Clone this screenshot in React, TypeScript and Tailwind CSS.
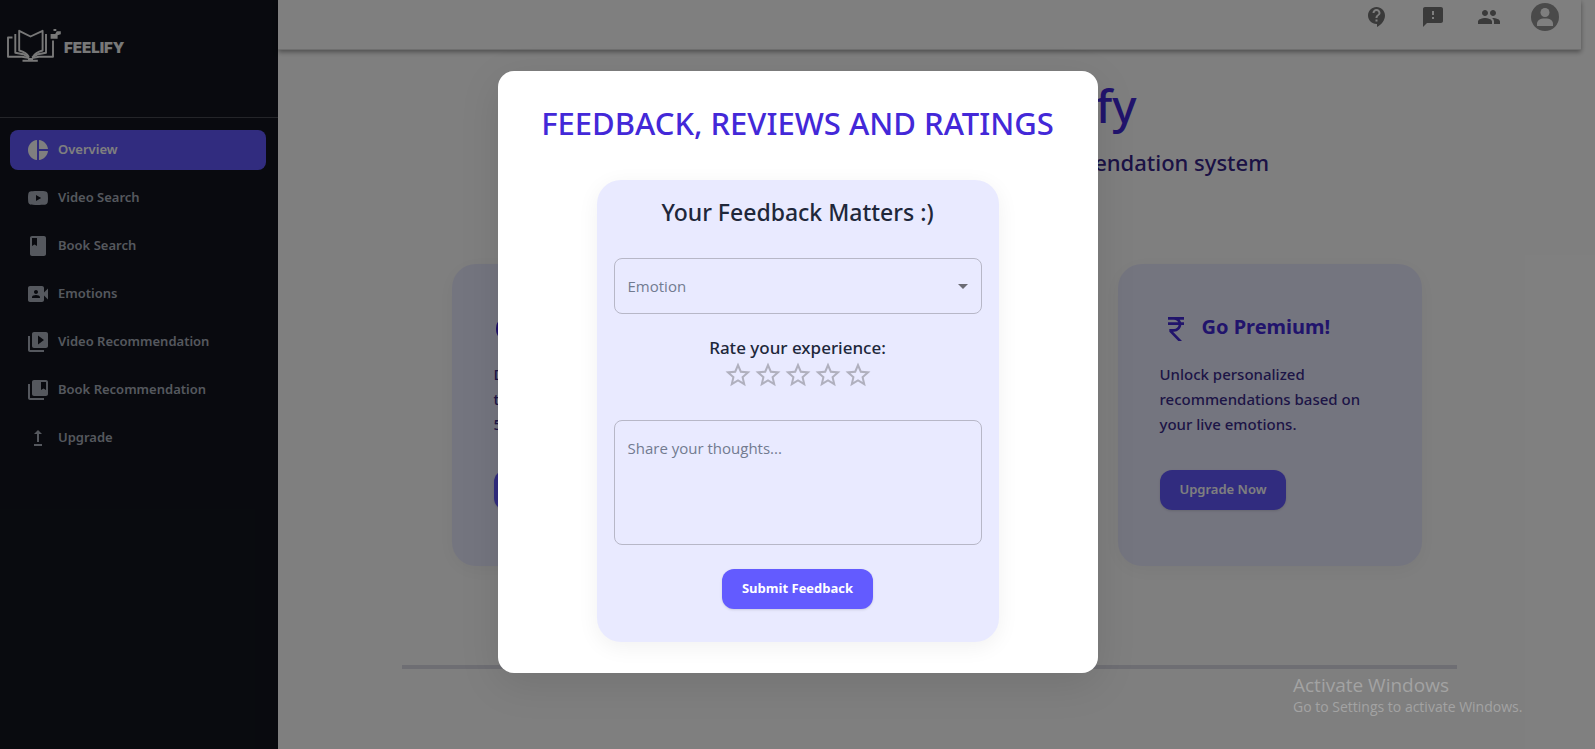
import React from 'react';
import {
  MdPieChart, MdClass, MdVideoCameraFront, MdVideoLibrary, MdCollectionsBookmark, MdUpgrade,
  MdContactSupport, MdFeedback, MdGroup, MdCurrencyRupee, MdStarBorder, MdArrowDropDown,
} from 'react-icons/md';

type IconProps = { className?: string };

function YouTubeIcon({ className }: IconProps) {
  return (
    <svg viewBox="0 0 24 24" fill="currentColor" className={className} aria-hidden="true">
      <path d="M10 15l5.19-3L10 9v6m11.56-7.83c.13.47.22 1.1.28 1.9.07.8.1 1.49.1 2.09L22 12c0 2.19-.16 3.8-.44 4.83-.25.9-.83 1.48-1.73 1.73-.47.13-1.33.22-2.65.28-1.3.07-2.49.1-3.59.1L12 19c-4.19 0-6.8-.16-7.83-.44-.9-.25-1.48-.83-1.73-1.73-.13-.47-.22-1.1-.28-1.9-.07-.8-.1-1.49-.1-2.09L2 12c0-2.19.16-3.8.44-4.83.25-.9.83-1.48 1.73-1.73.47-.13 1.33-.22 2.65-.28 1.3-.07 2.49-.1 3.59-.1L12 5c4.19 0 6.8.16 7.83.44.9.25 1.48.83 1.73 1.73z" />
    </svg>
  );
}

function BookLogo() {
  return (
    <svg viewBox="0 0 54 34" className="h-[34px] w-[54px]" fill="none" stroke="#f0f0f0" strokeWidth="1.9" strokeLinejoin="round" aria-hidden="true">
      <path d="M5.500 9.500H1v19.300h14l7 1.200" />
      <path d="M46 12.500v16.300H32l-7 1.200" />
      <path d="M8.300 6v18.800l8 1.400 6 3.200" />
      <path d="M39 6v18.800l-8 1.400-6 3.200" />
      <path d="M21.500 28.500c-1.500-3-4-4.500-9.300-6V2.800L23.500 8.500 35.600 2.800v19.700c-5.300 1.500-7.800 3-9.300 6" />
      <path d="M15.500 32.800h15.300M21 31h5" />
      <path d="M43.600 6h4.600l1.600-2.700h4V6.300l-3.200 1v3.500h-7zM46.500 1h2.800v2h-2.800z" fill="#f0f0f0" stroke="none" />
    </svg>
  );
}

const navItems = [
  { label: 'Overview', Icon: MdPieChart, active: true },
  { label: 'Video Search', Icon: YouTubeIcon },
  { label: 'Book Search', Icon: MdClass },
  { label: 'Emotions', Icon: MdVideoCameraFront },
  { label: 'Video Recommendation', Icon: MdVideoLibrary },
  { label: 'Book Recommendation', Icon: MdCollectionsBookmark },
  { label: 'Upgrade', Icon: MdUpgrade },
];

function Sidebar() {
  return (
    <aside className="flex w-[278px] shrink-0 flex-col bg-[#12151e]">
      <a href="#home" className="flex h-[117px] items-start gap-[3px] pt-7 pl-[7px]" aria-label="Feelify">
        <BookLogo />
        <span className="pt-2 font-['Inter',sans-serif] text-[15px] leading-6 font-black text-[#f0f0f0]">FEELIFY</span>
      </a>
      <nav className="flex flex-col gap-2 border-t border-[#484a52] py-3 pr-3 pl-[10px] font-['Noto_Sans','Open_Sans',sans-serif]">
        {navItems.map(({ label, Icon, active }) => (
          <a
            key={label}
            href="#nav"
            className={`flex h-10 items-center gap-2 rounded-lg px-4 text-[13px] font-semibold ${
              active ? 'bg-[#6359ff] text-white' : 'text-[#aab0bc]'
            }`}
          >
            <Icon className="size-6" />
            {label}
          </a>
        ))}
      </nav>
    </aside>
  );
}

function TopBar() {
  return (
    <header className="mr-3.5 flex h-[50px] shrink-0 items-start justify-end gap-7 border-b border-[#dedede] pr-[22px] text-[#747474] shadow-[0_2px_5px_rgba(0,0,0,0.4)]">
      <button aria-label="Help" className="flex h-[34px] w-7 items-center justify-center"><MdContactSupport className="size-6" /></button>
      <button aria-label="Feedback" className="flex h-[34px] w-7 items-center justify-center"><MdFeedback className="size-6" /></button>
      <button aria-label="Community" className="flex h-[34px] w-7 items-center justify-center"><MdGroup className="size-6" /></button>
      <button aria-label="Account" className="flex h-[34px] w-7 items-center justify-center">
        <svg viewBox="0 0 28 28" className="size-7" aria-hidden="true">
          <circle cx="14" cy="14" r="14" fill="#949494" />
          <circle cx="14" cy="9.500" r="4.500" fill="#fff" />
          <path d="M6 23v-2c0-3.500 2.500-5.500 8-5.500s8 2 8 5.500v2z" fill="#fff" />
        </svg>
      </button>
    </header>
  );
}

type FeatureProps = { icon: React.ReactNode; title: string; text: string; action: string };

function FeatureCard({ icon, title, text, action }: FeatureProps) {
  return (
    <article className="flex h-[302px] w-[304px] flex-col items-start rounded-3xl bg-[#e9eaff] px-[42px] pt-[49px] shadow-[0_4px_20px_rgba(0,0,0,0.05)]">
      <h3 className="flex items-start gap-2.5 font-['Noto_Sans','Open_Sans',sans-serif] text-[20px] leading-7 font-bold text-[#4328d8]">
        <span className="flex size-8 items-center justify-center">{icon}</span>
        {title}
      </h3>
      <p className="mt-[17px] font-['Noto_Sans','Open_Sans',sans-serif] text-[15px] leading-[25px] font-medium text-[#3b2a8c]">{text}</p>
      <button className="mt-[33px] h-10 rounded-xl bg-[#6359ff] px-5 font-['Noto_Sans','Open_Sans',sans-serif] text-[13px] font-semibold text-white shadow-sm">{action}</button>
    </article>
  );
}

function Dashboard() {
  return (
    <main className="flex flex-col items-center">
      <div className="mr-3.5 flex flex-col items-center font-['Noto_Sans','Open_Sans',sans-serif] font-medium">
        <h1 className="mt-5 text-[46px] leading-[70px] text-[#4328d8]">Welcome to Feelify</h1>
        <p className="text-[22px] leading-[44px] text-[#37248a]">The live emotion based video and book recommendation system</p>
      </div>
      <section className="mt-20 flex gap-[29px]">
        <FeatureCard icon={<span className="size-7 rounded-full bg-[#3a1cd0]" />} title="Discover" text="Discover amazing videos through a huge library of 5000+ titles." action="Try Now" />
        <FeatureCard icon={<MdVideoLibrary className="size-7" />} title="Videos" text="Find videos that suit your mood." action="Search" />
        <FeatureCard icon={<MdCurrencyRupee className="size-8" />} title="Go Premium!" text="Unlock personalized recommendations based on your live emotions." action="Upgrade Now" />
      </section>
      <div className="flex w-full justify-center pr-3.5">
        <hr className="mt-[99px] h-1 w-[81%] border-0 bg-[#dcdce6]" />
      </div>
    </main>
  );
}

function FeedbackDialog() {
  return (
    <div role="dialog" aria-modal="true" aria-labelledby="dialog-title" className="flex w-[600px] flex-col items-center rounded-2xl bg-white pt-[30px] pb-[31px] shadow-[0_11px_40px_rgba(0,0,0,0.1)]">
      <h2 id="dialog-title" className="font-['Noto_Sans','Open_Sans',sans-serif] text-[31px] leading-[44px] font-medium whitespace-nowrap text-[#4328d8]">FEEDBACK, REVIEWS AND RATINGS</h2>
      <form className="mt-[35px] flex w-[402px] flex-col items-center rounded-3xl bg-[#e9eaff] px-[17px] pt-4 pb-[33px] shadow-[0_5px_22px_rgba(0,0,0,0.06)]" onSubmit={(e) => e.preventDefault()}>
        <h3 className="font-['Noto_Sans','Open_Sans',sans-serif] text-[23px] leading-8 font-medium text-[#20273a]">Your Feedback Matters :)</h3>
        <div className="relative mt-[30px] w-full">
          <select aria-label="Emotion" className="h-14 w-full appearance-none rounded-lg border border-[#b7b7c7] bg-transparent px-[13px] text-[15px] text-[#727b90]">
            <option>Emotion</option>
          </select>
          <MdArrowDropDown className="pointer-events-none absolute top-4 right-[7px] size-6 text-[#6b6b74]" />
        </div>
        <p className="mt-[22px] font-['Noto_Sans','Open_Sans',sans-serif] text-[17px] leading-6 font-medium text-[#20273a]">Rate your experience:</p>
        <div className="flex h-[30px] text-[#b0b0be]">
          {[1, 2, 3, 4, 5].map((n) => (
            <button key={n} type="button" aria-label={`${n} stars`}><MdStarBorder className="size-[30px]" /></button>
          ))}
        </div>
        <textarea aria-label="Share your thoughts" placeholder="Share your thoughts..." className="mt-[30px] h-[125px] w-full resize-none rounded-lg border border-[#b7b7c7] bg-transparent px-[13px] py-4 text-[15px] placeholder:text-[#727b90]" />
        <button className="mt-6 h-10 rounded-xl bg-[#635bff] px-5 text-[13px] font-bold text-white shadow-sm">Submit Feedback</button>
      </form>
    </div>
  );
}

export default function App() {
  return (
    <div className="relative flex min-h-screen overflow-hidden bg-white font-['Open_Sans','Noto_Sans',sans-serif]">
      <Sidebar />
      <div className="flex min-w-0 flex-1 flex-col">
        <TopBar />
        <Dashboard />
      </div>
      <div className="absolute inset-0 flex items-start justify-center bg-black/50 pt-[71px]">
        <FeedbackDialog />
      </div>
      <aside className="absolute right-[62px] bottom-8 w-60 text-[#a3a3a3]">
        <p className="text-[19px] leading-6">Activate Windows</p>
        <p className="text-sm leading-5">Go to Settings to activate Windows.</p>
      </aside>
    </div>
  );
}
